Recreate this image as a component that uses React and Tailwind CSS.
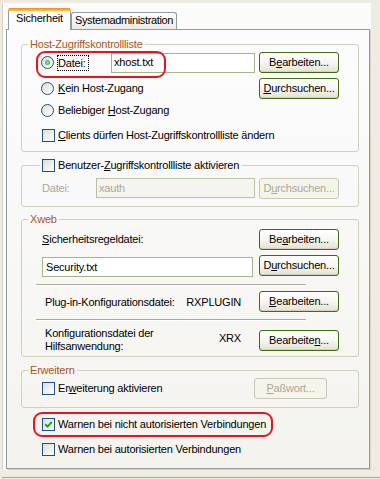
import React from "react";

const btnBase =
  "flex items-center justify-center shrink-0 rounded-[3px] border border-[#3F6B12] bg-linear-to-b from-white via-[#F7F6F0] to-[#E4E1D2] shadow-[inset_0_-1px_0_#D6D1BE] text-black";
const btnOff =
  "flex items-center justify-center shrink-0 rounded-[3px] border border-[#CBC7B8] bg-[#F5F4EA] text-[#ACA899]";
const legendStyle = "ml-[6px] px-[2px] leading-[13px] text-[#A8561C]";
const groupStyle = "w-[338px] rounded-[3px] border border-[#D0D0BF]";

function Btn({ children, w = "w-[80px]", off }) {
  return <div className={`${off ? btnOff : btnBase} ${w} h-[21px]`}>{children}</div>;
}

function Check({ checked }) {
  return (
    <span className="w-[13px] h-[13px] shrink-0 border border-[#1C5180] bg-linear-to-br from-[#DCDCD7] to-white flex items-center justify-center">
      {checked && (
        <svg width="9" height="9" viewBox="0 0 9 9">
          <path d="M1.2 4.2 L3.6 6.6 L7.8 1.8" stroke="#21A121" strokeWidth="2" fill="none" />
        </svg>
      )}
    </span>
  );
}

function Radio({ checked }) {
  return (
    <span className="w-[13px] h-[13px] shrink-0 rounded-full border border-[#1C5180] bg-linear-to-br from-[#DCDCD7] to-white flex items-center justify-center">
      {checked && <span className="w-[5px] h-[5px] rounded-full bg-radial from-[#8CEB8C] to-[#1E9B1E]" />}
    </span>
  );
}

function Sep() {
  return <div className="ml-[-5px] w-[270px] h-[2px] border-t border-[#ACA899] border-b border-b-white" />;
}

export default function App() {
  return (
    <div className="relative w-[380px] h-[479px] overflow-hidden flex flex-col bg-[#EEECE2] pt-[3px] pl-[2px] font-['Liberation_Sans',Arial,sans-serif] text-[11px] leading-[13px] tracking-[-0.2px] text-black">
      <div className="w-[369px] bg-[#FBFBF9] border-l border-[#D8D5C8] pl-[3px] pb-[1px]">
        {/* tabs */}
        <div className="h-[27px] flex items-end pl-[2px]">
          <div className="relative z-10 w-[63px] h-[22px] flex flex-col border-x border-[#919B9C] rounded-t-[3px] bg-[#FCFCFE]">
            <div className="-mx-px h-[3px] rounded-t-[3px] bg-linear-to-b from-[#E68B2C] to-[#FFC73C]" />
            <div className="mt-[1px] flex justify-center">Sicherheit</div>
          </div>
          <div className="w-[106px] h-[17px] mb-[1px] flex justify-center pt-[1px] border-x border-t border-[#919B9C] rounded-t-[3px] bg-linear-to-b from-white to-[#ECEBE5] tracking-[-0.35px]">
            Systemadministration
          </div>
        </div>

        {/* panel */}
        <div className="-mt-px w-[364px] h-[440px] border border-[#919B9C] bg-linear-to-b from-[#FCFCFE] to-[#F4F3EE] shadow-[1px_1px_0_#D6D3C6] pl-[14px] pt-[8px]">
          <fieldset className={groupStyle}>
            <legend className={legendStyle}>Host-Zugriffskontrollliste</legend>
            <div className="px-[19px] pb-[2px]">
              <div className="mt-[1px] h-[21px] flex items-center">
                <Radio checked />
                <span className="ml-[3px] border border-dotted border-black leading-[14px] pr-[2px]">Datei:</span>
                <div className="ml-auto w-[144px] h-[20px] border border-[#A5B58B] bg-white pl-[2px] flex items-center">xhost.txt</div>
                <div className="ml-[4px]">
                  <Btn>
                    B<u>e</u>arbeiten...
                  </Btn>
                </div>
              </div>
              <div className="mt-[5px] h-[21px] flex items-center">
                <Radio />
                <span className="ml-[4px]">
                  <u>K</u>ein Host-Zugang
                </span>
                <div className="ml-auto">
                  <Btn>
                    <u>D</u>urchsuchen...
                  </Btn>
                </div>
              </div>
              <div className="h-[22px] flex items-center">
                <Radio />
                <span className="ml-[4px]">
                  Beliebiger <u>H</u>ost-Zugang
                </span>
              </div>
              <div className="h-[28px] flex items-center">
                <span className="ml-[1px]">
                  <Check />
                </span>
                <span className="ml-[3px]">
                  <u>C</u>lients dürfen Host-Zugriffskontrollliste ändern
                </span>
              </div>
            </div>
          </fieldset>

          <fieldset className={`${groupStyle} mt-[7px]`}>
            <legend className="ml-[18px] pl-[2px] pr-[3px] leading-[13px]">
              <span className="flex items-center">
                <Check />
                <span className="ml-[3px]">
                  Benutzer-<u>Z</u>ugriffskontrollliste aktivieren
                </span>
              </span>
            </legend>
            <div className="px-[19px] pb-[7px]">
              <div className="mt-[5px] h-[22px] flex items-center pl-[1px]">
                <span className="text-[#ACA899]">Datei:</span>
                <div className="ml-auto w-[159px] h-[20px] border border-[#B7C3A4] bg-[#F5F4EE] pl-[2px] flex items-center text-[#ACA899]">
                  xauth
                </div>
                <div className="ml-[4px]">
                  <Btn off>
                    D<u>u</u>rchsuchen...
                  </Btn>
                </div>
              </div>
            </div>
          </fieldset>

          <fieldset className={`${groupStyle} mt-[6px]`}>
            <legend className={legendStyle}>Xweb</legend>
            <div className="px-[19px] pb-[2px]">
              <div className="mt-[3px] h-[21px] flex items-center pl-[1px]">
                <span>
                  <u>S</u>icherheitsregeldatei:
                </span>
                <div className="ml-auto">
                  <Btn>
                    Be<u>a</u>rbeiten...
                  </Btn>
                </div>
              </div>
              <div className="mt-[5px] h-[22px] flex items-start pl-[1px]">
                <div className="mt-[2px] w-[211px] h-[20px] border border-[#A5B58B] bg-white pl-[3px] flex items-center">
                  Security.txt
                </div>
                <div className="ml-auto">
                  <Btn>
                    D<u>u</u>rchsuchen...
                  </Btn>
                </div>
              </div>
              <div className="mt-[7px]">
                <Sep />
              </div>
              <div className="mt-[5px] h-[21px] flex items-center pl-[4px]">
                <span className="mt-[2px]">Plug-in-Konfigurationsdatei:</span>
                <span className="flex-1 text-right pr-[18px] mt-[2px]">RXPLUGIN</span>
                <Btn>
                  <u>B</u>earbeiten...
                </Btn>
              </div>
              <div className="mt-[7px]">
                <Sep />
              </div>
              <div className="mt-[5px] h-[28px] flex items-center pl-[4px]">
                <span>
                  Konfigurationsdatei der
                  <br />
                  Hilfsanwendung:
                </span>
                <span className="flex-1 text-right pr-[18px] mb-[3px]">XRX</span>
                <Btn>
                  Bearbeite<u>n</u>...
                </Btn>
              </div>
            </div>
          </fieldset>

          <fieldset className={`${groupStyle} mt-[7px]`}>
            <legend className={legendStyle}>Erweitern</legend>
            <div className="px-[19px] pb-[8px]">
              <div className="mt-[1px] h-[21px] flex items-center">
                <span className="ml-[1px]">
                  <Check />
                </span>
                <span className="ml-[3px]">
                  Er<u>w</u>eiterung aktivieren
                </span>
                <div className="ml-auto mr-[12px]">
                  <Btn off w="w-[73px]">
                    <u>P</u>aßwort...
                  </Btn>
                </div>
              </div>
            </div>
          </fieldset>

          <div className="mt-[4px] ml-[21px] h-[25px] flex items-center">
            <Check checked />
            <span className="ml-[3px]">Warnen bei nicht autorisierten Verbindungen</span>
          </div>
          <div className="ml-[21px] h-[25px] flex items-center">
            <Check />
            <span className="ml-[3px]">Warnen bei autorisierten Verbindungen</span>
          </div>
        </div>
      </div>
      <div className="mt-auto mb-[1px] h-px bg-[#A7A6A0]" />

      {/* red highlight annotations */}
      <div className="absolute left-[36px] top-[51px] w-[130px] h-[27px] rounded-[9px] border-2 border-[#E8141C]" />
      <div className="absolute left-[33px] top-[412px] w-[240px] h-[25px] rounded-[9px] border-2 border-[#E8141C]" />
    </div>
  );
}
